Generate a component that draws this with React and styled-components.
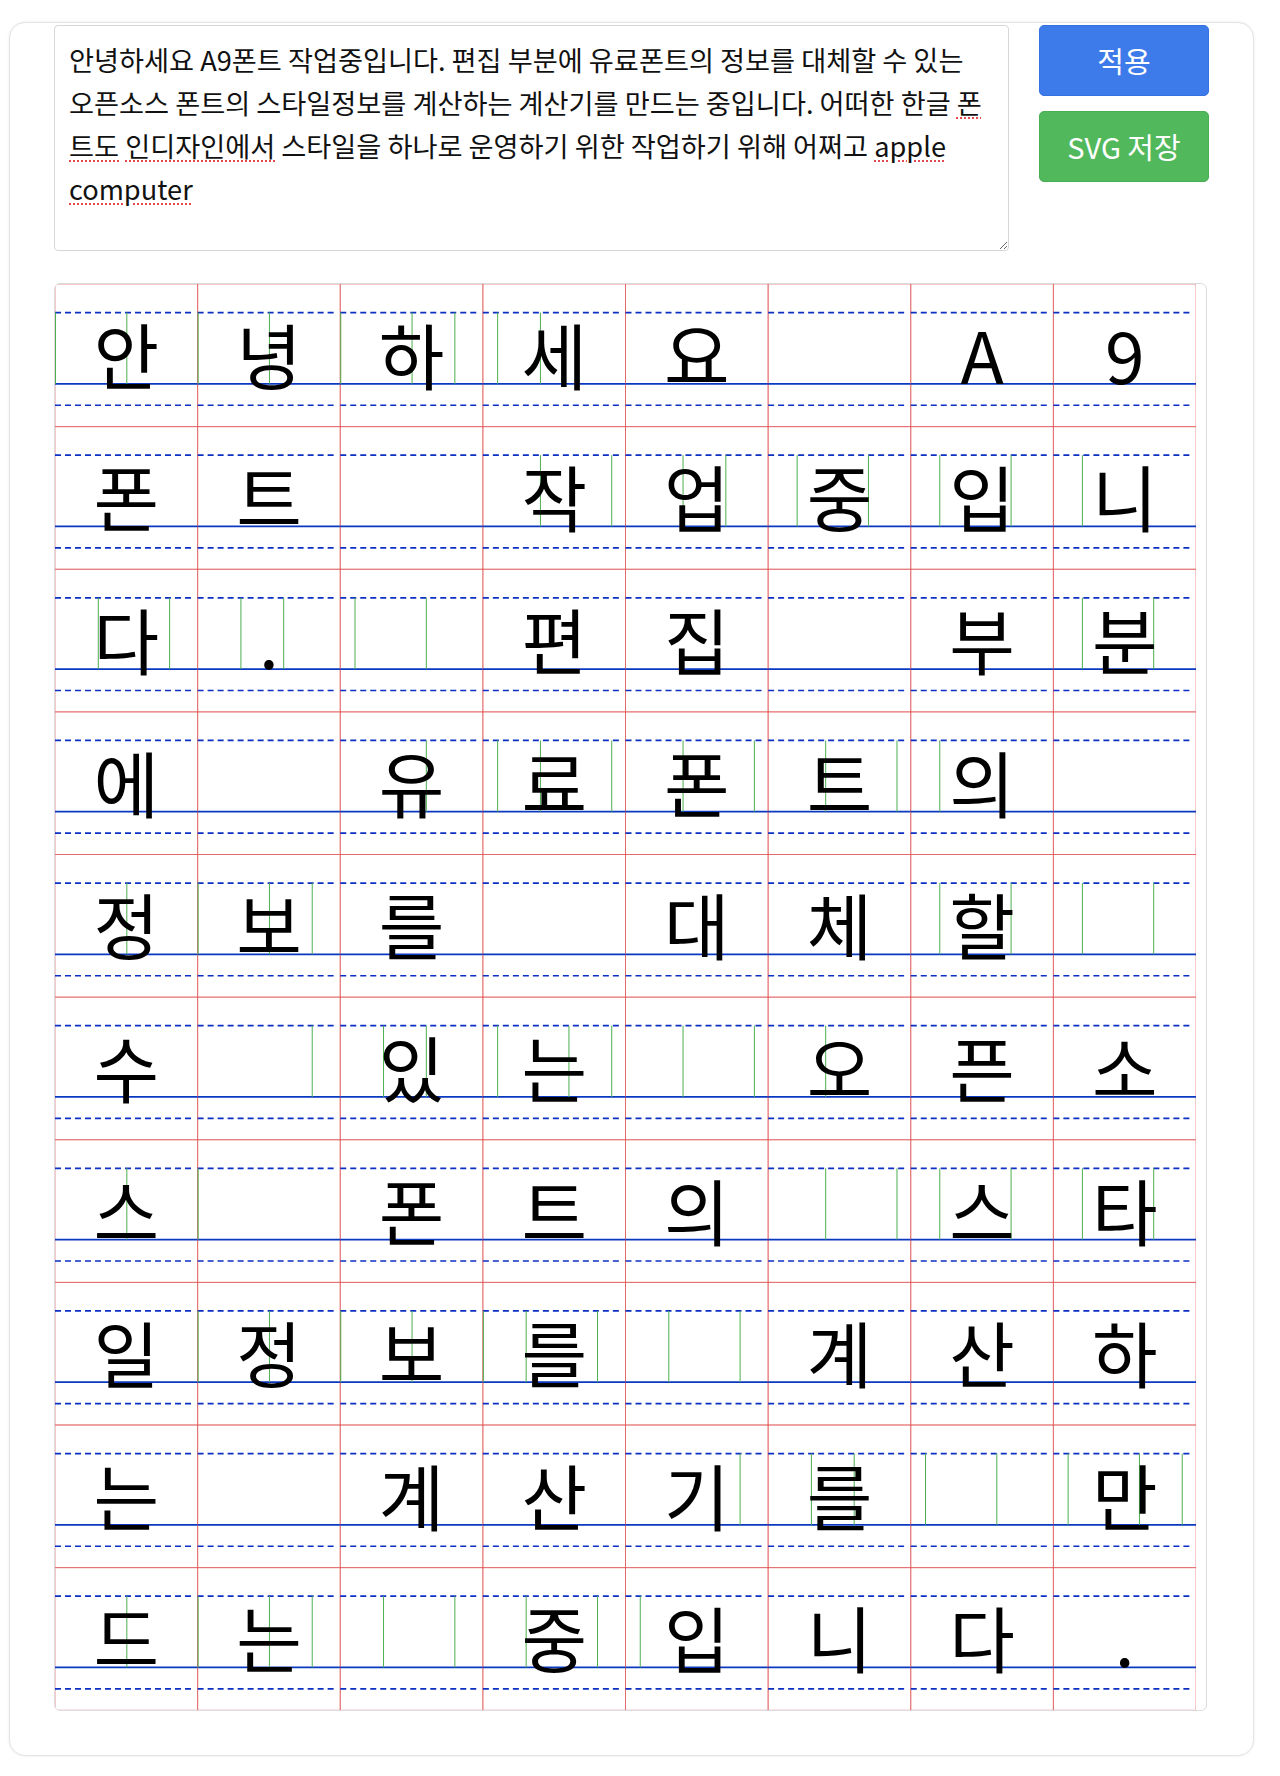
import React from "react";
import styled, { createGlobalStyle, css } from "styled-components";

const TEXT =
  "안녕하세요 A9폰트 작업중입니다. 편집 부분에 유료폰트의 정보를 대체할 수 있는 오픈소스 폰트의 스타일정보를 계산하는 계산기를 만드는 중입니다. 어떠한 한글 폰트도 인디자인에서 스타일을 하나로 운영하기 위한 작업하기 위해 어쩌고 apple computer";

const COLS = 8;
const ROWS = 10;
const GRID_W = 1141;
const CELL = GRID_W / COLS;
const U = CELL / 10;

const MARKS = [
  [0, 5, 10, 15, 20, 25, 28, 31, 34],
  [34, 39, 44, 47, 52, 57, 62, 67, 72],
  [3, 8, 13, 16, 21, 26, 72, 77],
  [26, 31, 34, 39, 44, 49, 54, 59, 62],
  [5, 10, 15, 18, 62, 67, 72, 77],
  [18, 23, 26, 31, 36, 39, 44, 49, 54],
  [5, 10, 54, 59, 62, 67, 72, 77],
  [10, 15, 20, 25, 30, 33, 38, 43, 48],
  [48, 53, 56, 61, 66, 71, 76, 79],
  [5, 10, 15, 18, 23, 28, 33, 38, 41],
];

const GlobalStyle = createGlobalStyle`
  html, body {
    margin: 0;
    padding: 0;
    background: #ffffff;
  }
  body {
    font-family: "Noto Sans CJK KR", "Noto Sans", sans-serif;
    color: #1f1f1f;
  }
`;

const Page = styled.div`
  box-sizing: border-box;
  width: 1280px;
  min-height: 1776px;
  padding: 22px 26px 20px 9px;
`;

const Card = styled.section`
  box-sizing: border-box;
  width: 1245px;
  background: #ffffff;
  border: 1px solid #e3e3e8;
  border-radius: 16px;
  box-shadow: 0 0 3px rgba(0, 0, 0, 0.08);
  padding: 2px 44px 44px 44px;
`;

const TopRow = styled.div`
  display: flex;
  align-items: flex-start;
  gap: 30px;
`;

const Editor = styled.div`
  box-sizing: border-box;
  flex: 0 0 955px;
  width: 955px;
  height: 226px;
  border: 1px solid #d6d6db;
  border-radius: 4px;
  padding: 12px 17px 12px 14px;
  font-family: "Noto Sans CJK KR", "Noto Sans", sans-serif;
  font-size: 27.2px;
  line-height: 43px;
  color: #111111;
  overflow: auto;
  resize: both;
  outline: none;
  word-break: normal;
  overflow-wrap: break-word;
`;

const Misspelled = styled.span`
  text-decoration-line: underline;
  text-decoration-style: dotted;
  text-decoration-color: #e5484d;
  text-decoration-thickness: 2px;
  text-underline-offset: 3px;
`;

const ButtonColumn = styled.div`
  display: flex;
  flex-direction: column;
  gap: 15px;
  width: 170px;
`;

const tones = {
  primary: css`
    background: #3e7bea;
    border-color: #3470e0;
  `,
  success: css`
    background: #51b85c;
    border-color: #48ad54;
  `,
};

const ActionButton = styled.button`
  box-sizing: border-box;
  width: 170px;
  height: 71px;
  border: 1px solid;
  border-radius: 5px;
  color: #ffffff;
  font-family: "Noto Sans CJK KR", "Noto Sans", sans-serif;
  font-size: 29px;
  line-height: 1;
  cursor: pointer;
  ${(p) => tones[p.$tone]}
`;

const GridBox = styled.div`
  box-sizing: border-box;
  width: 1153px;
  margin-top: 32px;
  border: 1px solid #dcdce0;
  border-radius: 6px;
  overflow: hidden;
  line-height: 0;
`;

const Svg = styled.svg`
  display: block;
`;

const CellFrame = styled.rect`
  fill: none;
  stroke: rgba(222, 80, 80, 0.62);
  stroke-width: 1;
`;

const Guide = styled.line`
  stroke: ${(p) => (p.$kind === "base" ? "#0a38c0" : "#0c2fc4")};
  stroke-width: ${(p) => (p.$kind === "base" ? 1.8 : 1.7)};
  stroke-dasharray: ${(p) => (p.$kind === "base" ? "none" : "6 4")};
`;

const Mark = styled.line`
  stroke: #4caf50;
  stroke-width: 1;
`;

const Glyph = styled.text`
  font-family: "Noto Sans CJK KR", "Noto Sans", sans-serif;
  fill: #000000;
`;

function GlyphGrid() {
  const chars = Array.from(TEXT).slice(0, COLS * ROWS);
  const height = ROWS * CELL;
  return (
    <Svg width={GRID_W} height={height} viewBox={`0 0 ${GRID_W} ${height}`}>
      {chars.map((ch, i) => {
        const x = (i % COLS) * CELL;
        const y = Math.floor(i / COLS) * CELL;
        return (
          <g key={`c${i}`}>
            <CellFrame x={x} y={y} width={CELL} height={CELL} />
            <Guide $kind="dash" x1={x} x2={x + CELL - 4} y1={y + 0.2 * CELL} y2={y + 0.2 * CELL} />
            <Guide $kind="base" x1={x} x2={x + CELL} y1={y + 0.7 * CELL} y2={y + 0.7 * CELL} />
            <Guide $kind="dash" x1={x} x2={x + CELL - 4} y1={y + 0.85 * CELL} y2={y + 0.85 * CELL} />
          </g>
        );
      })}
      {MARKS.map((row, r) =>
        row.map((u) => (
          <Mark
            key={`m${r}-${u}`}
            x1={u * U + 0.5}
            x2={u * U + 0.5}
            y1={r * CELL + 0.2 * CELL}
            y2={r * CELL + 0.7 * CELL}
          />
        ))
      )}
      {chars.map((ch, i) => {
        const x = (i % COLS) * CELL;
        const y = Math.floor(i / COLS) * CELL;
        return (
          <Glyph
            key={`t${i}`}
            x={x + CELL / 2}
            y={y + 0.7 * CELL}
            fontSize={CELL / 2}
            textAnchor="middle"
          >
            {ch}
          </Glyph>
        );
      })}
    </Svg>
  );
}

export default function App() {
  return (
    <>
      <GlobalStyle />
      <Page>
        <Card>
          <TopRow>
            <Editor contentEditable suppressContentEditableWarning spellCheck={false}>
              {"안녕하세요 A9폰트 작업중입니다. 편집 부분에 유료폰트의 정보를 대체할 수 있는 오픈소스 폰트의 스타일정보를 계산하는 계산기를 만드는 중입니다. 어떠한 한글 "}
              <Misspelled>폰트도</Misspelled>
              {" "}
              <Misspelled>인디자인에서</Misspelled>
              {" 스타일을 하나로 운영하기 위한 작업하기 위해 어쩌고 "}
              <Misspelled>apple</Misspelled>
              {" "}
              <Misspelled>computer</Misspelled>
            </Editor>
            <ButtonColumn>
              <ActionButton $tone="primary">적용</ActionButton>
              <ActionButton $tone="success">SVG 저장</ActionButton>
            </ButtonColumn>
          </TopRow>
          <GridBox>
            <GlyphGrid />
          </GridBox>
        </Card>
      </Page>
    </>
  );
}
